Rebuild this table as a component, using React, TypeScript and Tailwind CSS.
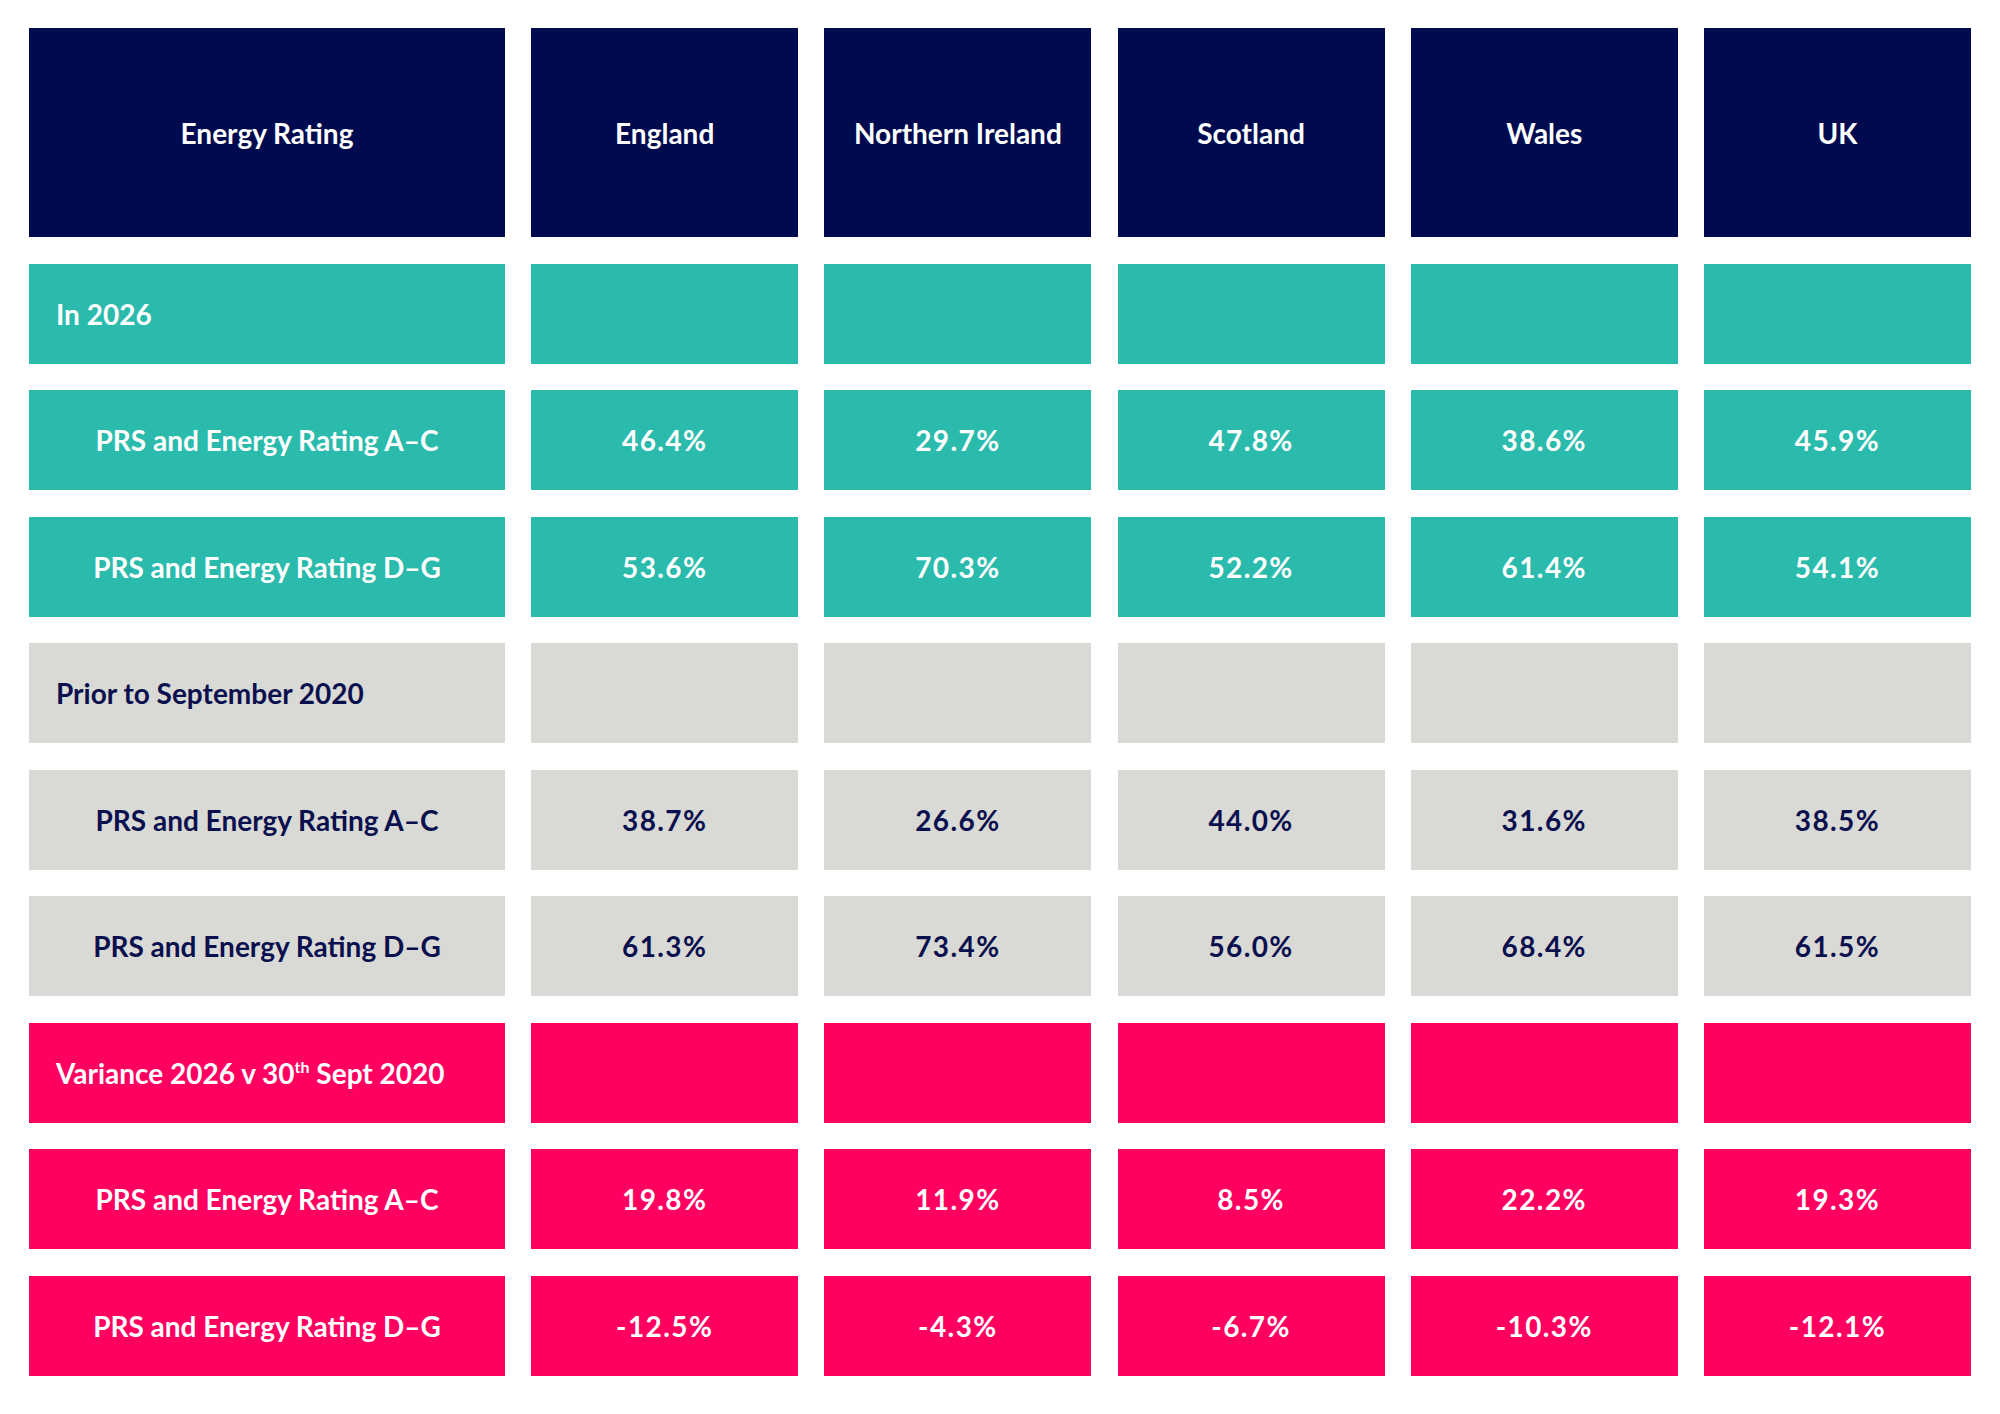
import React from "react";

type Tone = "navy" | "teal" | "grey" | "pink";

const cellTone: Record<Tone, string> = {
  navy: "bg-[#000b4f] text-white",
  teal: "bg-[#2bbbad] text-white",
  grey: "bg-[#d9d9d5] text-[#0a0f4e]",
  pink: "bg-[#ff0061] text-white",
};

type Row = {
  tone: Tone;
  label: React.ReactNode;
  section?: boolean;
  values: string[];
};

const rows: Row[] = [
  { tone: "teal", label: "In 2026", section: true, values: ["", "", "", "", ""] },
  { tone: "teal", label: "PRS and Energy Rating A–C", values: ["46.4%", "29.7%", "47.8%", "38.6%", "45.9%"] },
  { tone: "teal", label: "PRS and Energy Rating D–G", values: ["53.6%", "70.3%", "52.2%", "61.4%", "54.1%"] },
  { tone: "grey", label: "Prior to September 2020", section: true, values: ["", "", "", "", ""] },
  { tone: "grey", label: "PRS and Energy Rating A–C", values: ["38.7%", "26.6%", "44.0%", "31.6%", "38.5%"] },
  { tone: "grey", label: "PRS and Energy Rating D–G", values: ["61.3%", "73.4%", "56.0%", "68.4%", "61.5%"] },
  {
    tone: "pink",
    label: (
      <>
        Variance 2026 v 30<sup className="text-[16px] relative -top-[11px] align-baseline">th</sup> Sept 2020
      </>
    ),
    section: true,
    values: ["", "", "", "", ""],
  },
  { tone: "pink", label: "PRS and Energy Rating A–C", values: ["19.8%", "11.9%", "8.5%", "22.2%", "19.3%"] },
  { tone: "pink", label: "PRS and Energy Rating D–G", values: ["-12.5%", "-4.3%", "-6.7%", "-10.3%", "-12.1%"] },
];

const headers = ["Energy Rating", "England", "Northern Ireland", "Scotland", "Wales", "UK"];

export default function App() {
  return (
    <div className="min-h-[1414px] w-[2000px] bg-white pl-[29px] pt-[28px] font-['Lato',sans-serif] font-bold text-[28px]">
      <div className="grid grid-cols-[476px_repeat(5,267px)] gap-x-[26.2px] gap-y-[26.5px]">
        {headers.map((h) => (
          <div
            key={h}
            className={`${cellTone.navy} h-[209px] flex items-center justify-center`}
          >
            {h}
          </div>
        ))}
        {rows.map((r, i) => (
          <React.Fragment key={i}>
            <div
              className={`${cellTone[r.tone]} h-[100px] flex items-center ${
                r.section ? "justify-start pl-[27px]" : "justify-center"
              }`}
            >
              <span>{r.label}</span>
            </div>
            {r.values.map((v, j) => (
              <div
                key={j}
                className={`${cellTone[r.tone]} h-[100px] flex items-center justify-center tracking-[0.05em]`}
              >
                {v}
              </div>
            ))}
          </React.Fragment>
        ))}
      </div>
    </div>
  );
}
